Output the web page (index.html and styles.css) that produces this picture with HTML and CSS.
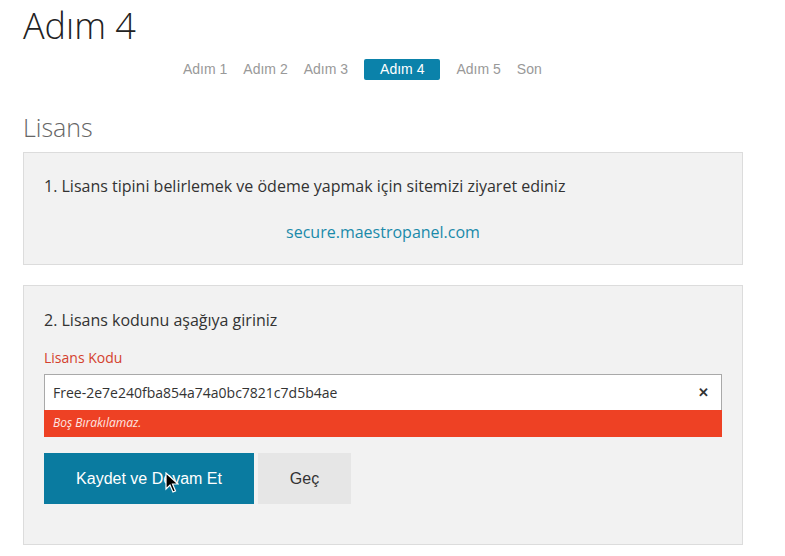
FILE: index.html
```html
<!DOCTYPE html>
<html lang="tr">
<head>
    <meta charset="UTF-8">
    <title>Adım 4</title>
    <link rel="stylesheet" href="styles.css">
</head>
<body>
    <!-- Baslik ve adimlar -->
    <h1 class="title">Adım 4</h1>
    <ul class="steps">
        <li>Adım 1</li>
        <li>Adım 2</li>
        <li>Adım 3</li>
        <li class="active">Adım 4</li>
        <li>Adım 5</li>
        <li>Son</li>
    </ul>

    <h2 class="section-title">Lisans</h2>

    <div class="panel panel-first">
        <p class="panel-text">1. Lisans tipini belirlemek ve ödeme yapmak için sitemizi ziyaret ediniz</p>
        <div class="panel-link"><a href="#">secure.maestropanel.com</a></div>
    </div>

    <div class="panel panel-second">
        <p class="panel-text">2. Lisans kodunu aşağıya giriniz</p>
        <label class="field-label" for="license">Lisans Kodu</label>
        <div class="field">
            <input id="license" class="input" type="text" value="Free-2e7e240fba854a74a0bc7821c7d5b4ae">
            <span class="clear">&#x2715;</span>
        </div>
        <div class="error">Boş Bırakılamaz.</div>
        <div class="actions">
            <button class="button button-primary">Kaydet ve Devam Et
                <svg class="cursor" width="14" height="22" viewBox="0 0 14 22">
                    <path d="M1 1 L1 17 L5 13 L8 20 L10.5 19 L7.5 12 L13 12 Z" fill="#000" stroke="#fff" stroke-width="1.2"/>
                </svg>
            </button>
            <button class="button button-secondary">Geç</button>
        </div>
    </div>
</body>
</html>
```

FILE: styles.css
```css
body {
    margin: 0;
    padding: 0 42px 0 23px;
    background-color: #fff;
    font-family: "Open Sans", Arial, sans-serif;
    color: #333;
}
.title {
    margin: 0;
    padding-top: 3px;
    font-size: 36px;
    font-weight: 300;
    line-height: 46px;
    color: #222;
}
.steps {
    display: flex;
    list-style: none;
    margin: 10px 0 0 152px;
    padding: 0;
    font-family: Arial, "Liberation Sans", sans-serif;
    font-size: 14px;
}
.steps li {
    padding: 0 8px;
    height: 21px;
    line-height: 21px;
    color: #999;
}
.steps li.active {
    margin: 0 8px;
    padding: 0 16px;
    background-color: #0b82aa;
    color: #fff;
    border-radius: 2px;
}
.section-title {
    margin: 32px 0 0;
    font-size: 25px;
    font-weight: 300;
    line-height: 30px;
    color: #666;
}
.panel {
    background-color: #f2f2f2;
    border: 1px solid #dcdcdc;
}
.panel-first {
    margin-top: 10px;
    padding: 21px 20px 20px;
}
.panel-second {
    margin-top: 20px;
    padding: 22px 20px 40px;
}
.panel-text {
    margin: 0;
    font-size: 16px;
    line-height: 24px;
    color: #333;
}
.panel-link {
    margin-top: 22px;
    text-align: center;
    font-size: 16px;
    line-height: 24px;
}
.panel-link a {
    color: #1a8aaa;
    text-decoration: none;
}
.field-label {
    display: block;
    margin-top: 16px;
    font-size: 14px;
    line-height: 20px;
    color: #d4412d;
}
.field {
    position: relative;
    margin-top: 6px;
}
.input {
    display: block;
    box-sizing: border-box;
    width: 100%;
    height: 36px;
    padding: 0 30px 0 8px;
    border: 1px solid #a9a9a9;
    border-bottom: none;
    background: #fff;
    font-family: "Open Sans", Arial, sans-serif;
    font-size: 14px;
    color: #333;
    outline: none;
}
.clear {
    position: absolute;
    right: 13px;
    top: 9px;
    font-size: 13px;
    font-weight: bold;
    color: #333;
}
.error {
    height: 27px;
    line-height: 26px;
    padding-left: 9px;
    background-color: #ee4124;
    color: #fde7e2;
    font-size: 12px;
    font-style: italic;
}
.actions {
    display: flex;
    gap: 4px;
    margin-top: 16px;
}
.button {
    position: relative;
    height: 51px;
    border: none;
    font-family: Arial, "Liberation Sans", sans-serif;
    font-size: 16px;
    cursor: pointer;
}
.button-primary {
    width: 210px;
    background-color: #0a7ba0;
    color: #fff;
}
.button-secondary {
    width: 93px;
    background-color: #e6e6e6;
    color: #333;
}
.cursor {
    position: absolute;
    left: 121px;
    top: 19px;
}
```
